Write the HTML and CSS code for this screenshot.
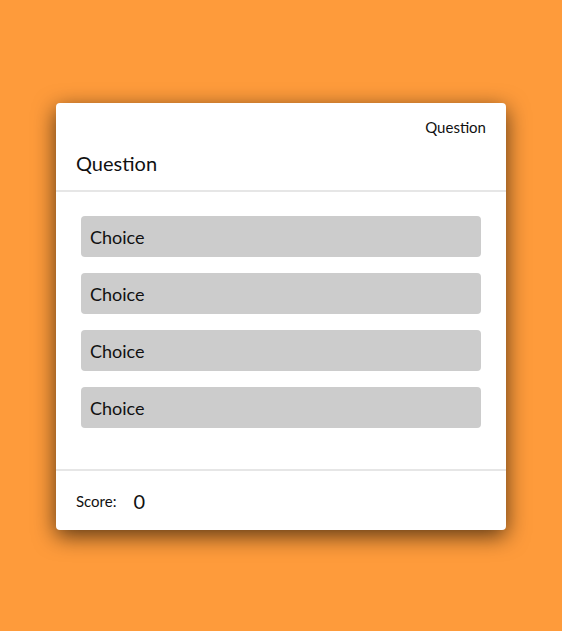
FILE: index.html
```html
<!DOCTYPE html>
<html>
<head>
  <title>Quiz</title>
  <link rel="stylesheet" href="styles.css">
</head>
<body>
  <div class="quiz">
    <div class="quiz-header">
      <div class="progress">Question</div>
      <h2 class="question">Question</h2>
    </div>
    <div class="choices">
      <div class="choice">Choice</div>
      <div class="choice">Choice</div>
      <div class="choice">Choice</div>
      <div class="choice">Choice</div>
    </div>
    <div class="quiz-footer">
      <span class="score-label">Score:</span>
      <span class="score">0</span>
    </div>
  </div>
</body>
</html>
```

FILE: styles.css
```css
html, body {
  height: 100%;
}

body {
  margin: 0;
  box-sizing: border-box;
  padding-top: 2px;
  font-family: 'Lato', 'Noto Sans', sans-serif;
  background-color: #fe9b3b;
  display: flex;
  align-items: center;
  justify-content: center;
  color: #111;
}

.quiz {
  width: 450px;
  background: #fff;
  border-radius: 4px;
  box-shadow: 0 6px 22px rgba(0, 0, 0, 0.65);
}

.quiz-header {
  padding: 14px 20px 0 20px;
  border-bottom: 2px solid #e6e6e6;
}

.progress {
  text-align: right;
  font-size: 15px;
  line-height: 20px;
}

.question {
  margin: 0;
  font-weight: normal;
  font-size: 20px;
  line-height: 26px;
  padding: 13px 0 14px 0;
}

.choices {
  padding: 24px 25px 25px 25px;
  border-bottom: 2px solid #e6e6e6;
}

.choice {
  background: #cccccc;
  border-radius: 4px;
  height: 41px;
  line-height: 43px;
  padding: 0 9px;
  font-size: 18px;
  margin-bottom: 16px;
}

.quiz-footer {
  height: 59px;
  display: flex;
  align-items: center;
  padding: 0 20px;
}

.score-label {
  font-size: 15px;
  margin-right: 17px;
}

.score {
  font-size: 20px;
}
```
